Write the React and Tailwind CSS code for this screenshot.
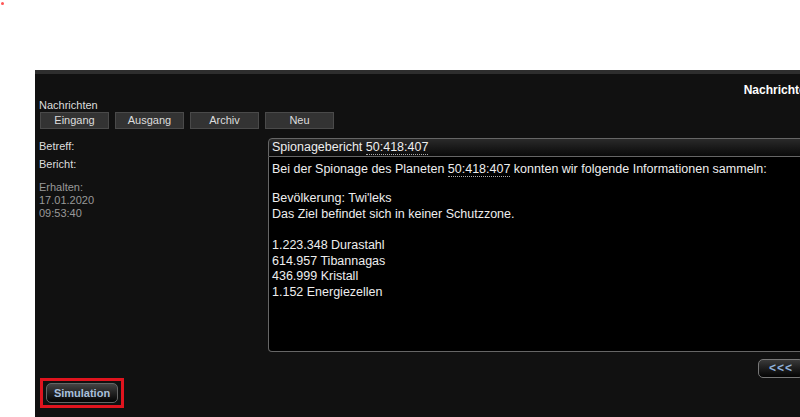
import React from 'react';

const font = { fontFamily: '"Liberation Sans", Arial, sans-serif' };

const NavButton = ({ label }) => (
  <button className="w-[69px] h-[17px] bg-[#333] border border-[#4a4a4a] text-[#ddd] text-[11px] leading-[15px] text-center">
    {label}
  </button>
);

const Coords = ({ value }) => (
  <span className="border-b border-dotted border-[#aaa]">{value}</span>
);

const App = () => {
  const lines = ['1.223.348 Durastahl', '614.957 Tibannagas', '436.999 Kristall', '1.152 Energiezellen'];

  return (
    <div className="relative w-[800px] h-[417px] bg-white overflow-hidden" style={font}>
      {/* little red marker top-left */}
      <div className="absolute left-[1px] top-[2px] w-[3px] h-[3px] bg-[#f55] rounded-full" />

      <div className="ml-[35px] mt-[70px] w-[800px] h-[347px] bg-[#111] border-t-4 border-[#2e2e2e] flex flex-col">
        {/* Header */}
        <div className="h-[27px] flex items-end justify-end pr-[22px] pb-[2px]">
          <span className="text-[12px] font-bold text-white leading-[14px]">Nachrichten</span>
        </div>

        <div className="pl-[4px] text-[11px] leading-[13px] text-[#ddd]">Nachrichten</div>
        <div className="flex gap-[6px] pl-[5px]">
          <NavButton label="Eingang" />
          <NavButton label="Ausgang" />
          <NavButton label="Archiv" />
          <NavButton label="Neu" />
        </div>

        {/* Message */}
        <div className="flex mt-[9px]">
          <div className="w-[233px] pl-[4px] pt-[2px] text-[11px] leading-[13px]">
            <div className="text-[#ddd]">Betreff:</div>
            <div className="text-[#ddd] mt-[5px]">Bericht:</div>
            <div className="text-[#999] mt-[10px] leading-[13px]">
              <div>Erhalten:</div>
              <div>17.01.2020</div>
              <div>09:53:40</div>
            </div>
          </div>

          <div className="flex-1">
            <div className="h-[19px] rounded-tl-[4px] border border-[#666] bg-gradient-to-b from-[#2a2a2a] to-[#0a0a0a] px-[3px] text-[12.5px] leading-[17px] text-[#eee]">
              Spionagebericht <Coords value="50:418:407" />
            </div>
            <div className="h-[195px] rounded-bl-[4px] border border-t-0 border-[#666] bg-black px-[3px] pt-[4px] text-[12.5px] leading-[16px] text-[#eee]">
              <div>
                Bei der Spionage des Planeten <Coords value="50:418:407" /> konnten wir folgende Informationen sammeln:
              </div>
              <div className="h-[13px]" />
              <div>Bevölkerung: Twi'leks</div>
              <div>Das Ziel befindet sich in keiner Schutzzone.</div>
              <div className="h-[16px]" />
              {lines.map((l) => (
                <div key={l} className="leading-[15.5px]">{l}</div>
              ))}
            </div>
            <div className="flex mt-[7px]">
              <button className="ml-[490px] w-[46px] h-[19px] rounded-[5px] border border-[#777] bg-gradient-to-b from-[#3a3a3a] to-[#050505] text-[12px] font-bold leading-[17px] text-[#8fb0d8] tracking-[1px]">
                &lt;&lt;&lt;
              </button>
            </div>
          </div>
        </div>

        {/* Simulation */}
        <div className="mt-auto mb-[9px] ml-[5px] w-[84px] h-[32px] border-[3px] border-[#e0141e] flex items-center justify-center">
          <button className="w-[72px] h-[20px] rounded-[5px] border border-[#666] bg-gradient-to-b from-[#444] to-[#050505] text-[11px] font-bold leading-[18px] text-[#a9c0dc]">
            Simulation
          </button>
        </div>
      </div>
    </div>
  );
};

export default App;
